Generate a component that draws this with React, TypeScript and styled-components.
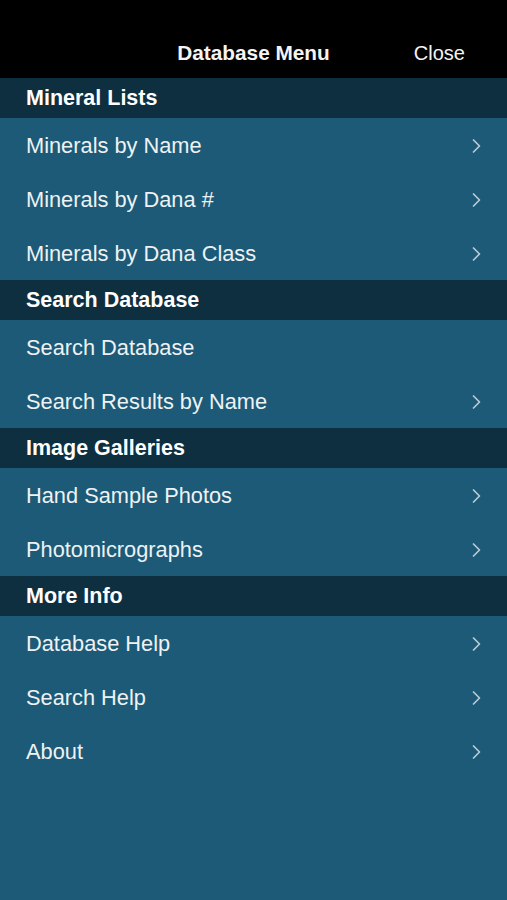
import * as React from "react";
import styled, { createGlobalStyle } from "styled-components";

const GlobalStyle = createGlobalStyle`
  html, body {
    margin: 0;
    padding: 0;
    background: #1c5a77;
  }
  body {
    font-family: "Liberation Sans", Arial, sans-serif;
  }
`;

const Screen = styled.div`
  width: 507px;
  min-height: 900px;
  background: #1c5a77;
  color: #f2f4f5;
`;

const NavBar = styled.header`
  height: 78px;
  background: #000;
  display: grid;
  grid-template-columns: 1fr auto 1fr;
  align-items: end;
  padding: 0 42px 13px 42px;
  box-sizing: border-box;
`;

const NavTitle = styled.h1`
  grid-column: 2;
  margin: 0;
  font-size: 20.8px;
  line-height: 24px;
  font-weight: bold;
  color: #f4f4f4;
`;

const NavButton = styled.button`
  grid-column: 3;
  justify-self: end;
  background: none;
  border: none;
  padding: 0;
  font-family: inherit;
  font-size: 20px;
  line-height: 24px;
  color: #f4f4f4;
`;

const SectionHeader = styled.div`
  height: 40px;
  background: #0e2f40;
  display: flex;
  align-items: center;
  padding: 0 26px;
  font-size: 21.5px;
  font-weight: bold;
  color: #ffffff;
`;

const Row = styled.div`
  height: 54px;
  display: flex;
  align-items: center;
  justify-content: space-between;
  padding: 2px 25px 0 26px;
  box-sizing: border-box;
  font-size: 21.8px;
  color: #eef2f4;
`;

const Chevron = () => (
  <svg width="12" height="16" viewBox="0 0 12 16" fill="none">
    <path d="M3.5 2 L9.5 8 L3.5 14" stroke="#b9cbd4" strokeWidth="1.7" strokeLinecap="round" strokeLinejoin="round" />
  </svg>
);

interface Item {
  label: string;
  arrow: boolean;
}

interface Section {
  title: string;
  items: Item[];
}

const sections: Section[] = [
  {
    title: "Mineral Lists",
    items: [
      { label: "Minerals by Name", arrow: true },
      { label: "Minerals by Dana #", arrow: true },
      { label: "Minerals by Dana Class", arrow: true },
    ],
  },
  {
    title: "Search Database",
    items: [
      { label: "Search Database", arrow: false },
      { label: "Search Results by Name", arrow: true },
    ],
  },
  {
    title: "Image Galleries",
    items: [
      { label: "Hand Sample Photos", arrow: true },
      { label: "Photomicrographs", arrow: true },
    ],
  },
  {
    title: "More Info",
    items: [
      { label: "Database Help", arrow: true },
      { label: "Search Help", arrow: true },
      { label: "About", arrow: true },
    ],
  },
];

export default function App() {
  return (
    <>
      <GlobalStyle />
      <Screen>
        <NavBar>
          <NavTitle>Database Menu</NavTitle>
          <NavButton>Close</NavButton>
        </NavBar>
        {sections.map((s) => (
          <React.Fragment key={s.title}>
            <SectionHeader>{s.title}</SectionHeader>
            {s.items.map((it) => (
              <Row key={it.label}>
                <span>{it.label}</span>
                {it.arrow && <Chevron />}
              </Row>
            ))}
          </React.Fragment>
        ))}
      </Screen>
    </>
  );
}
